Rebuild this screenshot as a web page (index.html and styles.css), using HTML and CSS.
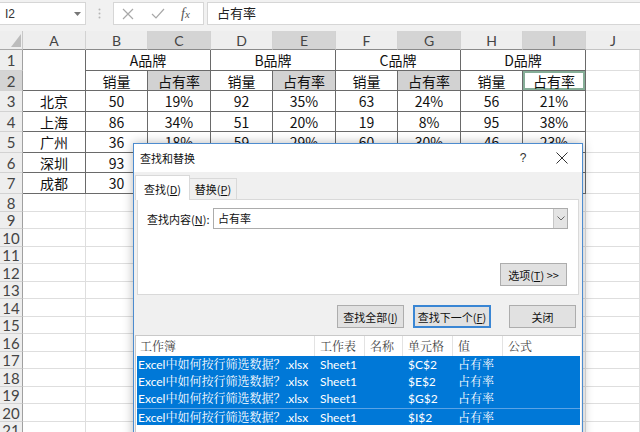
FILE: index.html
```html
<!DOCTYPE html>
<html lang="zh-CN">
<head>
<meta charset="utf-8">
<title>查找和替换</title>
<link rel="stylesheet" href="styles.css">
</head>
<body>
<div class="app">
  <div class="fbar">
    <div class="namebox"><span>I2</span><svg width="7" height="4" viewBox="0 0 7 4"><polygon points="0,0 7,0 3.5,4" fill="#777"/></svg></div>
    <div class="grip"><svg width="3" height="11" viewBox="0 0 3 11"><circle cx="1.5" cy="1.5" r="1" fill="#b5b5b5"/><circle cx="1.5" cy="5.5" r="1" fill="#b5b5b5"/><circle cx="1.5" cy="9.5" r="1" fill="#b5b5b5"/></svg></div>
    <div class="fbtns">
      <svg class="ic-x" width="12" height="12" viewBox="0 0 12 12"><path d="M1 1L11 11M11 1L1 11" stroke="#a8a8a8" stroke-width="1.2" fill="none"/></svg>
      <svg class="ic-ok" width="14" height="11" viewBox="0 0 14 11"><polyline points="1,6 5,10 13,1" stroke="#a8a8a8" stroke-width="1.2" fill="none"/></svg>
      <span class="fx"><i>f</i><i class="x">x</i></span>
    </div>
    <div class="finput">占有率</div>
  </div>

  <div class="sheet">
    <div class="corner"><svg width="10" height="13" viewBox="0 0 10 13"><polygon points="10,0 10,13 0,13" fill="#bcbcbc"/></svg></div>
    <div class="h">A</div><div class="h">B</div><div class="h hs">C</div><div class="h">D</div><div class="h hs">E</div><div class="h">F</div><div class="h hs">G</div><div class="h">H</div><div class="h hs">I</div><div class="h hj">J</div>

    <div class="r">1</div>
    <div class="t span-r"></div>
    <div class="t span-c">A品牌</div>
    <div class="t span-c">B品牌</div>
    <div class="t span-c">C品牌</div>
    <div class="t span-c">D品牌</div>
    <div class="c"></div>

    <div class="r rs">2</div>
    <div class="t">销量</div><div class="t s">占有率</div>
    <div class="t">销量</div><div class="t s">占有率</div>
    <div class="t">销量</div><div class="t s">占有率</div>
    <div class="t">销量</div><div class="t act">占有率</div>
    <div class="c"></div>

    <div class="r">3</div>
    <div class="t">北京</div><div class="t">50</div><div class="t">19%</div><div class="t">92</div><div class="t">35%</div><div class="t">63</div><div class="t">24%</div><div class="t">56</div><div class="t">21%</div>
    <div class="c"></div>

    <div class="r">4</div>
    <div class="t">上海</div><div class="t">86</div><div class="t">34%</div><div class="t">51</div><div class="t">20%</div><div class="t">19</div><div class="t">8%</div><div class="t">95</div><div class="t">38%</div>
    <div class="c"></div>

    <div class="r">5</div>
    <div class="t">广州</div><div class="t">36</div><div class="t">18%</div><div class="t">59</div><div class="t">29%</div><div class="t">60</div><div class="t">30%</div><div class="t">46</div><div class="t">23%</div>
    <div class="c"></div>

    <div class="r">6</div>
    <div class="t">深圳</div><div class="t">93</div><div class="t"></div><div class="t"></div><div class="t"></div><div class="t"></div><div class="t"></div><div class="t"></div><div class="t"></div>
    <div class="c"></div>

    <div class="r">7</div>
    <div class="t">成都</div><div class="t">30</div><div class="t"></div><div class="t"></div><div class="t"></div><div class="t"></div><div class="t"></div><div class="t"></div><div class="t"></div>
    <div class="c"></div>

    <div class="rstack">
      <div>8</div><div>9</div><div>10</div><div>11</div><div>12</div><div>13</div><div>14</div>
      <div>15</div><div>16</div><div>17</div><div>18</div><div>19</div><div>20</div><div>21</div>
    </div>
    <div class="col"></div><div class="col"></div><div class="col"></div><div class="col"></div><div class="col"></div>
    <div class="col"></div><div class="col"></div><div class="col"></div><div class="col"></div><div class="col"></div>
  </div>
</div>

<div class="dialog">
  <div class="dlg-title">
    <span class="dlg-name">查找和替换</span>
    <span class="dlg-help">?</span>
    <svg class="dlg-close" width="12" height="12" viewBox="0 0 12 12"><path d="M0.5 0.5L11.5 11.5M11.5 0.5L0.5 11.5" stroke="#333" stroke-width="1" fill="none"/></svg>
  </div>
  <div class="dlg-body">
    <div class="tabs">
      <div class="tab on">查找(<u>D</u>)</div>
      <div class="tab">替换(<u>P</u>)</div>
    </div>
    <div class="panel">
      <div class="find-row">
        <span class="find-label">查找内容(<u>N</u>):</span>
        <div class="combo">
          <span class="combo-text">占有率</span>
          <span class="combo-btn"><svg width="8" height="5" viewBox="0 0 8 5"><polyline points="0.5,0.5 4,4 7.5,0.5" stroke="#666" stroke-width="1" fill="none"/></svg></span>
        </div>
      </div>
      <div class="opt-row"><span class="btn opt">选项(<u>T</u>) &gt;&gt;</span></div>
    </div>
    <div class="btn-row">
      <span class="btn all">查找全部(<u>I</u>)</span>
      <span class="btn next">查找下一个(<u>F</u>)</span>
      <span class="btn close">关闭</span>
    </div>
    <div class="results">
      <div class="res-head">
        <span>工作簿</span><span>工作表</span><span>名称</span><span>单元格</span><span>值</span><span>公式</span>
      </div>
      <div class="res-row"><span>Excel中如何按行筛选数据？.xlsx</span><span>Sheet1</span><span></span><span>$C$2</span><span>占有率</span><span></span></div>
      <div class="res-row"><span>Excel中如何按行筛选数据？.xlsx</span><span>Sheet1</span><span></span><span>$E$2</span><span>占有率</span><span></span></div>
      <div class="res-row"><span>Excel中如何按行筛选数据？.xlsx</span><span>Sheet1</span><span></span><span>$G$2</span><span>占有率</span><span></span></div>
      <div class="res-row cur"><span>Excel中如何按行筛选数据？.xlsx</span><span>Sheet1</span><span></span><span>$I$2</span><span>占有率</span><span></span></div>
    </div>
  </div>
</div>
</body>
</html>
```

FILE: styles.css
```css
* { box-sizing: border-box; margin: 0; padding: 0; }
html, body { width: 640px; height: 432px; overflow: hidden; background: #fff; }
body { font-family: "Noto Sans CJK SC", sans-serif; color: #000; }

/* formula bar */
.fbar { height: 31px; background: #f1f1f1; display: flex; align-items: flex-start; padding-top: 2px; }
.namebox { width: 86px; height: 23px; background: #fff; border: 1px solid #d6d6d6; border-left: none;
  display: flex; align-items: center; justify-content: space-between; padding: 0 4px 0 5px;
  font: 12px "Liberation Sans", sans-serif; color: #333; }
.grip { width: 27px; height: 23px; display: flex; align-items: center; justify-content: center; }
.fbtns { width: 91px; height: 23px; background: #fff; border: 1px solid #d6d6d6; display: flex; align-items: center; }
.ic-x { margin-left: 8px; }
.ic-ok { margin-left: 17px; }
.fx { margin-left: 16px; font: italic 14px "Liberation Serif", serif; color: #555; line-height: 1; }
.fx .x { font-size: 11px; }
.finput { flex: 1; margin-left: 3px; height: 23px; background: #fff; border: 1px solid #d6d6d6; border-right: none;
  padding-left: 9px; font-size: 13px; line-height: 20px; color: #222; }

/* sheet */
.sheet { display: grid;
  grid-template-columns: 23px 63px 62px 63px 62px 63px 62px 63px 62px 63px 54px;
  grid-template-rows: 19px 21px 20px 21px 20px 21px 20px 21px 245px; }
.corner { background: #eeeeee; border-right: 1px solid #c8c8c8; border-bottom: 1px solid #a8a8a8;
  display: flex; align-items: flex-end; justify-content: flex-end; padding: 0 1px 2px 0; }
.h { background: #eeeeee; border-right: 1px solid #d2d2d2; border-bottom: 1px solid #8a8a8a;
  font: 14px "Lato", "Liberation Sans", sans-serif; color: #444; display: flex; align-items: center; justify-content: center; }
.hs { background: #d4d4d4; }
.hj { border-bottom-color: #c4c4c4; border-right: none; }
.r, .rstack > div { background: #eeeeee; border-right: 1px solid #a0a0a0; border-bottom: 1px solid #d2d2d2;
  font: 15px "Lato", "Liberation Sans", sans-serif; color: #444; display: flex; align-items: center; justify-content: center; }
.rs { background: #d4d4d4; }
.rstack { display: flex; flex-direction: column; }
.rstack > div:nth-child(odd) { height: 18px; flex: none; }
.rstack > div:nth-child(even) { height: 17px; flex: none; }
.c { border-right: 1px solid #dedede; border-bottom: 1px solid #dedede; }
.t { border-right: 1px solid #6a6a6a; border-bottom: 1px solid #6a6a6a; font-size: 14px; line-height: 18px;
  display: flex; align-items: center; justify-content: center; color: #111; }
.span-r { grid-row: span 2; }
.span-c { grid-column: span 2; }
.s { background: #d2d2d2; }
.act { box-shadow: inset 0 0 0 2px #86ae98; }
.col { border-right: 1px solid #dedede;
  background-image: repeating-linear-gradient(to bottom, transparent 0 17px, #dedede 17px 18px, transparent 18px 34px, #dedede 34px 35px); }

/* dialog */
.dialog { position: absolute; left: 133px; top: 143px; width: 450px; height: 300px;
  border: 1px solid #4d8ccf; background: #f0f0f0; box-shadow: 0 0 10px rgba(0,0,0,0.28);
  display: flex; flex-direction: column; font-size: 11px; }
.dlg-title { height: 28px; flex: none; background: #fff; display: flex; align-items: center; padding-left: 6px; }
.dlg-name { flex: 1; font-size: 11px; color: #111; }
.dlg-help { width: 10px; text-align: center; margin-right: 28px; font: 12px "Liberation Sans", sans-serif; color: #333; }
.dlg-close { margin-right: 14px; }
.dlg-body { flex: 1; padding: 3px 3px 0; display: flex; flex-direction: column; }
.tabs { display: flex; align-items: flex-end; height: 24px; margin-left: -2px; position: relative; z-index: 1; }
.tab { height: 21px; width: 47px; border: 1px solid #d9d9d9; border-bottom: none; border-left: none;
  display: flex; align-items: center; justify-content: center; color: #111; background: #f0f0f0; }
.tab.on { height: 25px; width: 55px; margin-bottom: -1px; background: #fff; border-left: 1px solid #d9d9d9; padding-top: 1px; }
.panel { height: 96px; flex: none; background: #fff; border: 1px solid #d9d9d9; padding: 8px 10px 0 9px; }
.find-row { display: flex; align-items: center; height: 21px; }
.find-label { width: 66px; flex: none; color: #111; }
.combo { flex: 1; height: 21px; border: 1px solid #acacac; display: flex; align-items: stretch; }
.combo-text { flex: 1; padding-left: 4px; font-size: 11px; line-height: 19px; color: #111; }
.combo-btn { width: 14px; background: #e4e4e4; border-left: 1px solid #c6c6c6; display: flex; align-items: center; justify-content: center; }
.opt-row { display: flex; justify-content: flex-end; margin-top: 34px; padding-right: 1px; }
.btn { height: 23px; background: #e1e1e1; border: 1px solid #adadad; display: flex; align-items: center; justify-content: center; color: #111; font-size: 11px; }
.opt { width: 67px; }
.btn-row { display: flex; justify-content: flex-end; margin-top: 10px; padding-right: 3px; height: 23px; flex: none; }
.all { width: 67px; }
.next { width: 78px; margin-left: 9px; border: 2px solid #3a86d4; }
.close { width: 67px; margin-left: 18px; }
.results { margin: 7px -2px 0; flex: 1; background: #fff; border-top: 1px solid #c9c9c9; border-left: 1px solid #c9c9c9; }
.res-head { display: grid; grid-template-columns: 179px 50px 38px 50px 50px 1fr; height: 20px;
  font-family: "Noto Serif CJK SC", "Noto Sans CJK SC", serif; font-size: 12px; color: #444; }
.res-head span { border-right: 1px solid #e3e3e3; padding-left: 5px; line-height: 20px; }
.res-head span:first-child { padding-left: 4px; }
.res-head span:last-child { border-right: none; }
.res-row { display: grid; grid-template-columns: 178px 50px 38px 50px 50px 1fr; height: 17px; margin: 0 1px;
  background: #0078d7; color: #fff; font-family: "Lato", "Noto Serif CJK SC", "Noto Sans CJK SC", sans-serif; font-size: 12px; }
.res-row:nth-child(4) { height: 18px; }
.res-row span { padding-left: 5px; line-height: 17px; white-space: nowrap; overflow: hidden; }
.res-row span:first-child { padding-left: 1px; }
.res-row.cur { border-top: 1px solid #5aa3e6; }
```
